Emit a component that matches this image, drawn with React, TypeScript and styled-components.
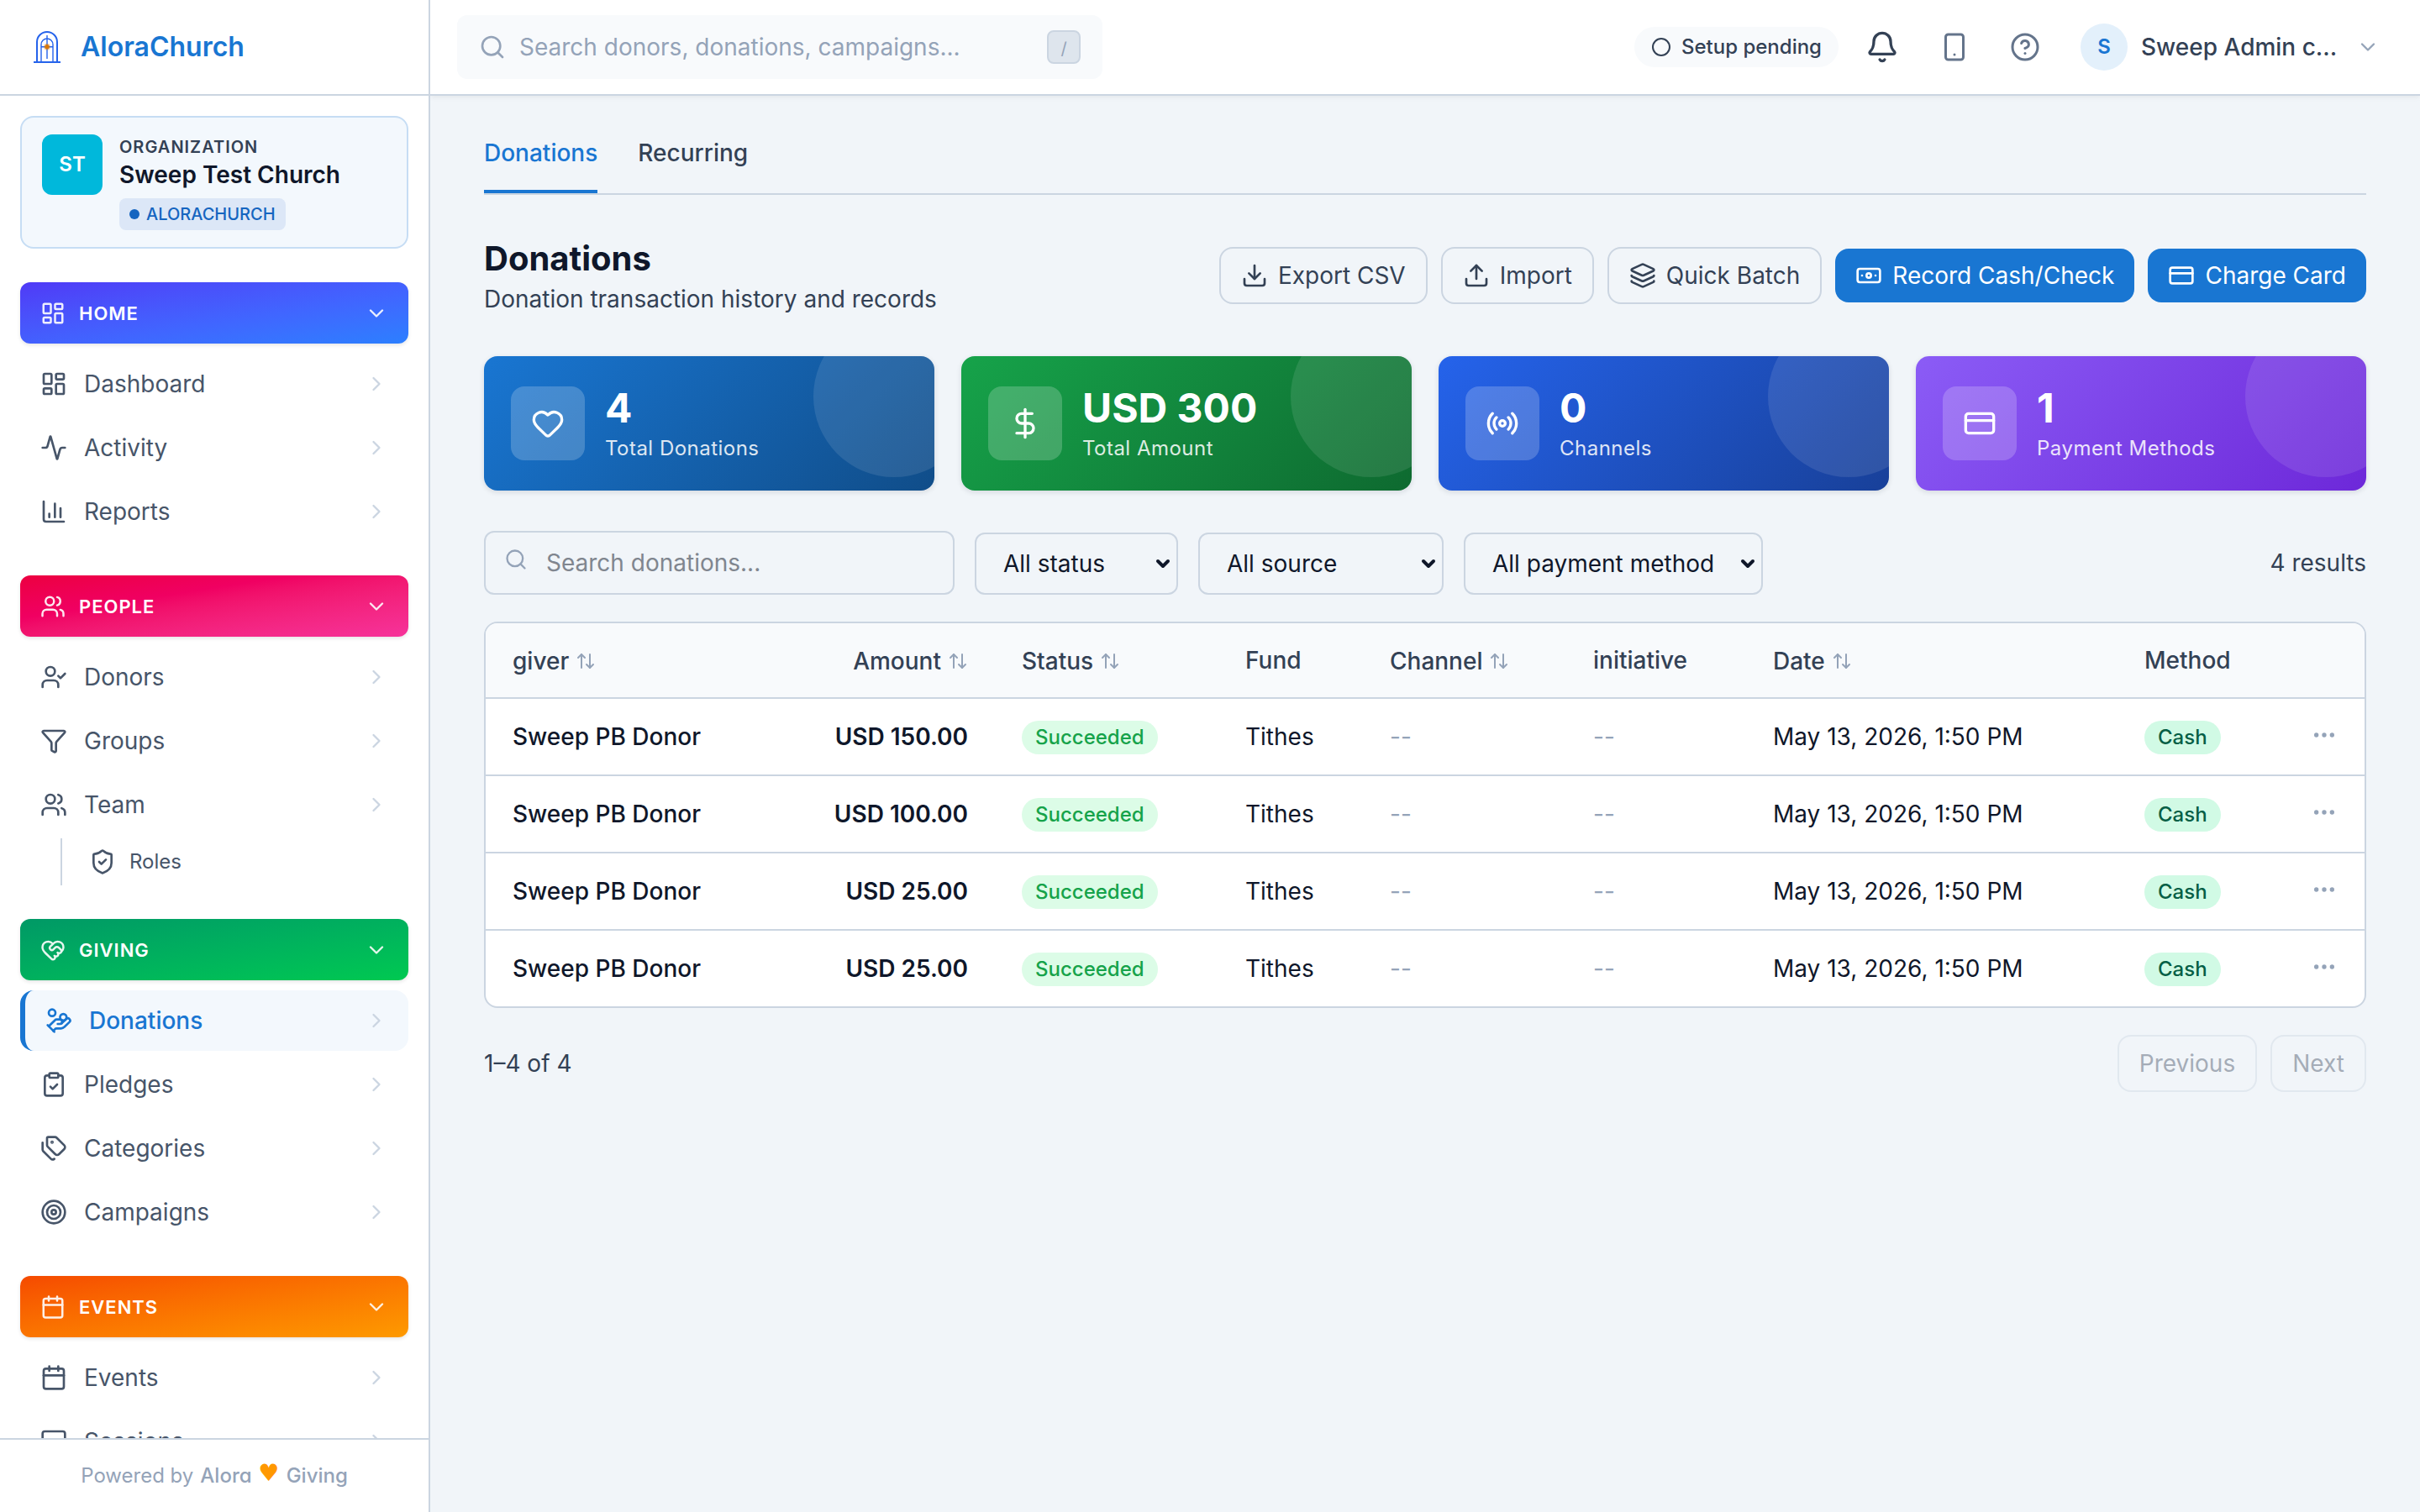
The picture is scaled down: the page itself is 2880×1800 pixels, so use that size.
import React, { useState } from "react";
import styled, { createGlobalStyle, css } from "styled-components";
import {
  Activity,
  ArrowUpDown,
  Banknote,
  Bell,
  Calendar,
  ChartColumn,
  ChevronDown,
  ChevronRight,
  Circle,
  CircleQuestionMark,
  ClipboardCheck,
  CreditCard,
  DollarSign,
  Download,
  Ellipsis,
  Funnel,
  HandCoins,
  Heart,
  HeartHandshake,
  Layers,
  LayoutDashboard,
  LucideIcon,
  Monitor,
  Radio,
  Search,
  ShieldCheck,
  Smartphone,
  Tags,
  Target,
  Upload,
  UserCheck,
  Users,
} from "lucide-react";

const GlobalStyle = createGlobalStyle`
  * {
    box-sizing: border-box;
  }
  body {
    margin: 0;
    background: #f1f5f9;
    color: #0f172a;
    font-family: Inter, "Liberation Sans", sans-serif;
    font-size: 28px;
    line-height: 40px;
  }
  button, input, select {
    font: inherit;
    color: inherit;
  }
  button {
    cursor: pointer;
  }
  a {
    color: inherit;
    text-decoration: none;
  }
  svg {
    display: block;
    flex-shrink: 0;
  }
`;

const Page = styled.div`
  display: flex;
  min-height: 100vh;
`;

/* ---------- sidebar ---------- */

const Sidebar = styled.aside`
  position: sticky;
  top: 0;
  width: 512px;
  height: 100vh;
  flex-shrink: 0;
  display: flex;
  flex-direction: column;
  background: #fff;
  border-right: 2px solid #cbd5e1;
`;

const Brand = styled.a`
  display: flex;
  align-items: center;
  gap: 16px;
  height: 114px;
  flex-shrink: 0;
  padding: 0 32px;
  border-bottom: 2px solid #cbd5e1;
  color: #1976d2;
  font-size: 32px;
  font-weight: 600;
`;

const SidebarBody = styled.div`
  flex: 1;
  min-height: 0;
  overflow: hidden;
  display: flex;
  flex-direction: column;
  gap: 40px;
  padding: 24px;
`;

const OrgCard = styled.div`
  display: flex;
  gap: 20px;
  flex-shrink: 0;
  padding: 20px 24px;
  background: #f3f8fd;
  border: 2px solid #c6ddf4;
  border-radius: 16px;
`;

const OrgAvatar = styled.div`
  display: grid;
  place-items: center;
  width: 72px;
  height: 72px;
  border-radius: 12px;
  background: #00b8db;
  color: #fff;
  font-size: 24px;
  font-weight: 600;
`;

const OrgInfo = styled.div`
  display: flex;
  flex-direction: column;
  align-items: flex-start;
`;

const OrgLabel = styled.span`
  font-size: 20px;
  line-height: 30px;
  font-weight: 600;
  letter-spacing: 1px;
  color: #334155;
`;

const OrgName = styled.strong`
  line-height: 36px;
  font-weight: 600;
`;

const OrgBadge = styled.span`
  display: flex;
  align-items: center;
  gap: 8px;
  height: 38px;
  margin-top: 10px;
  padding: 0 12px;
  border-radius: 8px;
  background: #dce7f7;
  color: #1565c0;
  font-size: 20px;
  font-weight: 500;
`;

const BadgeDot = styled.span`
  width: 12px;
  height: 12px;
  border-radius: 50%;
  background: currentColor;
`;

const Section = styled.section`
  display: flex;
  flex-direction: column;
  gap: 12px;
  flex-shrink: 0;
`;

const SectionButton = styled.button<{ $from: string; $to: string }>`
  display: flex;
  align-items: center;
  gap: 16px;
  height: 73px;
  padding: 0 24px;
  border: none;
  border-radius: 12px;
  background: linear-gradient(
    to bottom right in oklab,
    ${(props) => props.$from},
    ${(props) => props.$to}
  );
  box-shadow: 0 2px 4px rgba(0, 0, 0, 0.1);
  color: #fff;
  font-size: 22px;
  font-weight: 600;
  letter-spacing: 1px;
  text-transform: uppercase;
  svg {
    opacity: 0.9;
  }
`;

const Grow = styled.span`
  flex: 1;
  text-align: left;
`;

const NavList = styled.nav`
  display: flex;
  flex-direction: column;
  gap: 4px;
`;

const NavLink = styled.a<{ $active?: boolean }>`
  display: flex;
  align-items: center;
  gap: 20px;
  height: 72px;
  padding: 0 24px;
  border-radius: 16px;
  color: #475569;
  ${(props) =>
    props.$active &&
    css`
      border-left: 6px solid #1976d2;
      background: #f3f8fd;
      color: #1976d2;
      font-weight: 500;
    `}
`;

const NavArrow = styled(ChevronRight)`
  color: #cbd5e1;
`;

const SubList = styled.div`
  margin-left: 48px;
  border-left: 2px solid #cbd5e1;
`;

const SubLink = styled.a`
  display: flex;
  align-items: center;
  gap: 16px;
  height: 56px;
  padding: 0 32px;
  color: #475569;
  font-size: 24px;
`;

const PoweredBy = styled.footer`
  display: flex;
  align-items: center;
  justify-content: center;
  gap: 8px;
  height: 88px;
  flex-shrink: 0;
  border-top: 2px solid #cbd5e1;
  color: #94a3b8;
  font-size: 24px;
  strong {
    font-weight: 500;
    font-feature-settings: "cv11";
  }
`;

const HeartMark = styled.span`
  padding-bottom: 6px;
  font-family: "DejaVu Sans", sans-serif;
  font-size: 28px;
  color: #ff9800;
`;

/* ---------- top bar ---------- */

const Content = styled.div`
  flex: 1;
  min-width: 0;
`;

const TopBar = styled.header`
  display: flex;
  align-items: center;
  justify-content: space-between;
  height: 114px;
  padding: 0 32px;
  background: #fff;
  border-bottom: 2px solid #cbd5e1;
  box-shadow: 0 2px 6px rgba(0, 0, 0, 0.06);
`;

const GlobalSearch = styled.label`
  display: flex;
  align-items: center;
  gap: 16px;
  width: 768px;
  height: 76px;
  padding: 0 24px;
  border: 2px solid transparent;
  border-radius: 12px;
  background: #f8fafc;
  color: #94a3b8;
`;

const GlobalInput = styled.input`
  flex: 1;
  min-width: 0;
  padding: 0;
  border: none;
  outline: none;
  background: transparent;
  &::placeholder {
    color: #94a3b8;
    opacity: 1;
  }
`;

const Key = styled.kbd`
  display: grid;
  place-items: center;
  width: 40px;
  height: 40px;
  border: 2px solid #cbd5e1;
  border-radius: 8px;
  background: #dee5ed;
  font-family: inherit;
  font-size: 20px;
`;

const TopActions = styled.div`
  display: flex;
  align-items: center;
  gap: 16px;
`;

const SetupPill = styled.button`
  display: flex;
  align-items: center;
  gap: 12px;
  height: 48px;
  padding: 0 20px;
  border: none;
  border-radius: 24px;
  background: #f8fafc;
  color: #334155;
  font-size: 24px;
  font-weight: 500;
`;

const IconButton = styled.button<{ $dark?: boolean }>`
  display: grid;
  padding: 16px;
  border: none;
  background: none;
  color: ${(props) => (props.$dark ? "#334155" : "#64748b")};
`;

const UserButton = styled.button`
  display: flex;
  align-items: center;
  gap: 16px;
  padding: 0 16px;
  border: none;
  background: none;
  color: #334155;
  font-weight: 500;
  svg {
    color: #94a3b8;
  }
`;

const UserAvatar = styled.span`
  display: grid;
  place-items: center;
  width: 56px;
  height: 56px;
  border-radius: 50%;
  background: #e3f0fb;
  color: #1976d2;
  font-size: 24px;
  font-weight: 600;
`;

const UserName = styled.span`
  width: 240px;
  text-align: left;
  white-space: nowrap;
`;

/* ---------- page body ---------- */

const Main = styled.main`
  display: flex;
  flex-direction: column;
  padding: 48px 64px;
`;

const Tabs = styled.div`
  display: flex;
  gap: 48px;
  border-bottom: 2px solid #cbd5e1;
`;

const Tab = styled.button<{ $active: boolean }>`
  height: 68px;
  padding: 0 0 24px;
  border: none;
  border-bottom: 4px solid ${(props) => (props.$active ? "#1976d2" : "transparent")};
  background: none;
  color: ${(props) => (props.$active ? "#1976d2" : "#334155")};
  font-weight: 500;
`;

const PageHead = styled.div`
  display: flex;
  align-items: center;
  justify-content: space-between;
  margin: 48px 0;
`;

const Title = styled.h1`
  margin: 0;
  font-size: 40px;
  line-height: 56px;
  font-weight: 700;
`;

const Subtitle = styled.p`
  margin: 0;
  color: #334155;
`;

const Actions = styled.div`
  display: flex;
  align-items: center;
  gap: 16px;
`;

const Button = styled.button<{ $primary?: boolean }>`
  display: flex;
  align-items: center;
  gap: 12px;
  padding: 12px 24px;
  border: 2px solid #cbd5e1;
  border-radius: 16px;
  background: transparent;
  color: #334155;
  ${(props) =>
    props.$primary &&
    css`
      border: none;
      background: #1976d2;
      color: #fff;
    `}
  &:disabled {
    opacity: 0.4;
    cursor: default;
  }
`;

const StatGrid = styled.div`
  display: grid;
  grid-template-columns: repeat(4, 1fr);
  gap: 32px;
`;

const StatCard = styled.div<{ $from: string; $to: string }>`
  position: relative;
  overflow: hidden;
  display: flex;
  align-items: center;
  gap: 24px;
  padding: 32px;
  border-radius: 16px;
  background: linear-gradient(135deg, ${(props) => props.$from}, ${(props) => props.$to});
  box-shadow: 0 2px 6px rgba(15, 23, 42, 0.12);
  color: #fff;
  &::after {
    content: "";
    position: absolute;
    top: -48px;
    right: -48px;
    width: 192px;
    height: 192px;
    border-radius: 50%;
    background: rgba(255, 255, 255, 0.1);
  }
`;

const StatIcon = styled.div`
  display: grid;
  place-items: center;
  width: 88px;
  height: 88px;
  border-radius: 16px;
  background: rgba(255, 255, 255, 0.2);
`;

const StatValue = styled.div`
  font-size: 48px;
  line-height: 60px;
  font-weight: 700;
`;

const StatLabel = styled.div`
  font-size: 24px;
  line-height: 36px;
  letter-spacing: 0.02em;
  opacity: 0.85;
`;

const Filters = styled.div`
  display: flex;
  align-items: flex-end;
  gap: 24px;
  margin: 48px 0 32px;
`;

const FilterSearch = styled.label`
  display: grid;
  align-items: center;
  width: 560px;
  > * {
    grid-area: 1 / 1;
  }
  svg {
    margin: 0 24px 8px;
    color: #94a3b8;
  }
`;

const FilterInput = styled.input`
  width: 100%;
  height: 76px;
  padding: 0 24px 0 72px;
  border: 2px solid #cbd5e1;
  border-radius: 12px;
  outline: none;
  background: transparent;
  &::placeholder {
    color: #80868f;
    opacity: 1;
  }
`;

const SelectBox = styled.span`
  display: grid;
  align-items: center;
  justify-items: end;
  > * {
    grid-area: 1 / 1;
  }
  svg {
    margin-right: 6px;
    pointer-events: none;
  }
`;

const Select = styled.select<{ $width: number }>`
  width: ${(props) => props.$width}px;
  height: 74px;
  padding: 0 48px 0 32px;
  border: 2px solid #cbd5e1;
  border-radius: 12px;
  appearance: none;
  background: transparent;
`;

const ResultCount = styled.span`
  align-self: center;
  margin-left: auto;
  color: #334155;
`;

const TableFrame = styled.div`
  overflow: hidden;
  border: 2px solid #cbd5e1;
  border-radius: 16px;
  background: #fff;
`;

const Table = styled.table`
  width: 100%;
  table-layout: fixed;
  border-collapse: separate;
  border-spacing: 0;
  text-align: left;
  tbody tr:last-child td {
    height: 90px;
    border-bottom: none;
  }
`;

const Th = styled.th<{ $right?: boolean }>`
  height: 90px;
  padding: 0 32px;
  border-bottom: 2px solid #cbd5e1;
  background: #f8fafc;
  color: #334155;
  font-weight: 500;
  text-align: ${(props) => (props.$right ? "right" : "left")};
`;

const SortButton = styled.button`
  display: inline-flex;
  align-items: center;
  gap: 8px;
  padding: 0;
  border: none;
  background: none;
  vertical-align: middle;
  svg {
    color: #94a3b8;
  }
`;

const Td = styled.td<{ $right?: boolean; $weight?: number; $muted?: boolean }>`
  height: 92px;
  padding: 0 32px;
  border-bottom: 2px solid #cbd5e1;
  white-space: nowrap;
  text-align: ${(props) => (props.$right ? "right" : "left")};
  font-weight: ${(props) => props.$weight || 400};
  color: ${(props) => (props.$muted ? "#94a3b8" : "inherit")};
`;

const Pill = styled.span<{ $tone: "success" | "cash" }>`
  display: inline-block;
  padding: 0 16px;
  border-radius: 20px;
  background: ${(props) => (props.$tone === "success" ? "#dcfce7" : "#d1fae5")};
  color: ${(props) => (props.$tone === "success" ? "#16a34a" : "#065f46")};
  font-size: 24px;
  font-weight: 500;
  vertical-align: middle;
`;

const RowMenu = styled.button`
  display: grid;
  padding: 0 0 4px;
  border: none;
  background: none;
  color: #94a3b8;
`;

const Pager = styled.div`
  display: flex;
  align-items: center;
  justify-content: space-between;
  margin-top: 32px;
  color: #334155;
`;

/* ---------- data ---------- */

type NavItem = {
  label: string;
  icon: LucideIcon;
  children?: { label: string; icon: LucideIcon }[];
};

type NavSection = {
  title: string;
  icon: LucideIcon;
  from: string;
  to: string;
  items: NavItem[];
};

const SECTIONS: NavSection[] = [
  {
    title: "Home",
    icon: LayoutDashboard,
    from: "oklch(51.1% 0.262 276.966)",
    to: "oklch(62.3% 0.214 259.815)",
    items: [
      { label: "Dashboard", icon: LayoutDashboard },
      { label: "Activity", icon: Activity },
      { label: "Reports", icon: ChartColumn },
    ],
  },
  {
    title: "People",
    icon: Users,
    from: "oklch(58.6% 0.253 17.585)",
    to: "oklch(65.6% 0.241 354.308)",
    items: [
      { label: "Donors", icon: UserCheck },
      { label: "Groups", icon: Funnel },
      { label: "Team", icon: Users, children: [{ label: "Roles", icon: ShieldCheck }] },
    ],
  },
  {
    title: "Giving",
    icon: HeartHandshake,
    from: "oklch(59.6% 0.145 163.225)",
    to: "oklch(72.3% 0.219 149.579)",
    items: [
      { label: "Donations", icon: HandCoins },
      { label: "Pledges", icon: ClipboardCheck },
      { label: "Categories", icon: Tags },
      { label: "Campaigns", icon: Target },
    ],
  },
  {
    title: "Events",
    icon: Calendar,
    from: "oklch(64.6% 0.222 41.116)",
    to: "oklch(76.9% 0.188 70.08)",
    items: [
      { label: "Events", icon: Calendar },
      { label: "Sessions", icon: Monitor },
    ],
  },
];

const STATS = [
  { value: "4", label: "Total Donations", icon: Heart, from: "#1976d2", to: "#104d89" },
  { value: "USD 300", label: "Total Amount", icon: DollarSign, from: "#16a34a", to: "#0e6a30" },
  { value: "0", label: "Channels", icon: Radio, from: "#2563eb", to: "#184099" },
  { value: "1", label: "Payment Methods", icon: CreditCard, from: "#8b5cf6", to: "#6d28d9" },
];

const FILTERS = [
  { label: "Status", width: 242, options: ["All status", "Succeeded", "Pending"] },
  { label: "Source", width: 292, options: ["All source", "Online giving"] },
  { label: "Payment method", width: 356, options: ["All payment method", "Cash", "Card"] },
];

const COLUMNS = [
  { label: "giver", sortable: true },
  { label: "Amount", sortable: true, right: true, width: 268 },
  { label: "Status", sortable: true, width: 266 },
  { label: "Fund", width: 172 },
  { label: "Channel", sortable: true, width: 242 },
  { label: "initiative", width: 214 },
  { label: "Date", sortable: true, width: 442 },
  { label: "Method", width: 198 },
  { label: "", width: 96 },
];

const DONATIONS = ["150.00", "100.00", "25.00", "25.00"].map((amount, id) => ({
  id,
  giver: "Sweep PB Donor",
  amount: "USD " + amount,
  fund: "Tithes",
  date: "May 13, 2026, 1:50 PM",
}));

const ChurchLogo = () => (
  <svg width="48" height="48" viewBox="0 0 48 48" fill="none" stroke="#2563eb" aria-hidden="true">
    <path d="M12 42V18a12 12 0 0 1 24 0v24" strokeWidth="2" />
    <path d="M17 42V21a7 7 0 0 1 14 0v21" strokeWidth="1.4" />
    <path d="M24 10v28M17 23.7h14" strokeWidth="1.4" />
    <path d="M8 42h32" strokeWidth="2" />
    <circle cx="24" cy="23.7" r="4" fill="#d97706" fillOpacity="0.35" stroke="none" />
    <circle cx="24" cy="23.7" r="2.6" fill="#d97706" stroke="none" />
  </svg>
);

const SideNav = () => (
  <Sidebar>
    <Brand href="#">
      <ChurchLogo />
      AloraChurch
    </Brand>
    <SidebarBody>
      <OrgCard>
        <OrgAvatar>ST</OrgAvatar>
        <OrgInfo>
          <OrgLabel>ORGANIZATION</OrgLabel>
          <OrgName>Sweep Test Church</OrgName>
          <OrgBadge>
            <BadgeDot />
            ALORACHURCH
          </OrgBadge>
        </OrgInfo>
      </OrgCard>
      {SECTIONS.map((section) => (
        <Section key={section.title}>
          <SectionButton $from={section.from} $to={section.to}>
            <section.icon size={30} />
            <Grow>{section.title}</Grow>
            <ChevronDown size={28} />
          </SectionButton>
          <NavList>
            {section.items.map((item) => (
              <React.Fragment key={item.label}>
                <NavLink href="#" $active={item.label === "Donations"}>
                  <item.icon size={32} />
                  <Grow>{item.label}</Grow>
                  <NavArrow size={28} />
                </NavLink>
                {item.children && (
                  <SubList>
                    {item.children.map((child) => (
                      <SubLink href="#" key={child.label}>
                        <child.icon size={32} />
                        {child.label}
                      </SubLink>
                    ))}
                  </SubList>
                )}
              </React.Fragment>
            ))}
          </NavList>
        </Section>
      ))}
    </SidebarBody>
    <PoweredBy>
      <span>Powered by</span>
      <strong>Alora</strong>
      <HeartMark>♥</HeartMark>
      <strong>Giving</strong>
    </PoweredBy>
  </Sidebar>
);

const Header = () => (
  <TopBar>
    <GlobalSearch>
      <Search size={32} />
      <GlobalInput placeholder="Search donors, donations, campaigns..." aria-label="Search" />
      <Key>/</Key>
    </GlobalSearch>
    <TopActions>
      <SetupPill>
        <Circle size={24} />
        Setup pending
      </SetupPill>
      <IconButton $dark aria-label="Notifications">
        <Bell size={40} />
      </IconButton>
      <IconButton aria-label="Mobile app">
        <Smartphone size={36} />
      </IconButton>
      <IconButton aria-label="Help">
        <CircleQuestionMark size={36} />
      </IconButton>
      <UserButton>
        <UserAvatar>S</UserAvatar>
        <UserName>Sweep Admin c...</UserName>
        <ChevronDown size={28} />
      </UserButton>
    </TopActions>
  </TopBar>
);

const DonationTable = () => (
  <TableFrame>
    <Table>
      <colgroup>
        {COLUMNS.map((col) => (
          <col key={col.label} width={col.width} />
        ))}
      </colgroup>
      <thead>
        <tr>
          {COLUMNS.map((col) => (
            <Th key={col.label} $right={col.right}>
              {col.sortable ? (
                <SortButton>
                  {col.label}
                  <ArrowUpDown size={24} />
                </SortButton>
              ) : (
                col.label
              )}
            </Th>
          ))}
        </tr>
      </thead>
      <tbody>
        {DONATIONS.map((row) => (
          <tr key={row.id}>
            <Td $weight={500}>{row.giver}</Td>
            <Td $right $weight={600}>
              {row.amount}
            </Td>
            <Td>
              <Pill $tone="success">Succeeded</Pill>
            </Td>
            <Td>{row.fund}</Td>
            <Td $muted>--</Td>
            <Td $muted>--</Td>
            <Td>{row.date}</Td>
            <Td>
              <Pill $tone="cash">Cash</Pill>
            </Td>
            <Td>
              <RowMenu aria-label="Row actions">
                <Ellipsis size={32} />
              </RowMenu>
            </Td>
          </tr>
        ))}
      </tbody>
    </Table>
  </TableFrame>
);

const App = () => {
  const [tab, setTab] = useState("Donations");
  return (
    <>
      <GlobalStyle />
      <Page>
        <SideNav />
        <Content>
          <Header />
          <Main>
            <Tabs>
              {["Donations", "Recurring"].map((name) => (
                <Tab key={name} $active={tab === name} onClick={() => setTab(name)}>
                  {name}
                </Tab>
              ))}
            </Tabs>
            <PageHead>
              <div>
                <Title>Donations</Title>
                <Subtitle>Donation transaction history and records</Subtitle>
              </div>
              <Actions>
                <Button>
                  <Download size={32} />
                  Export CSV
                </Button>
                <Button>
                  <Upload size={32} />
                  Import
                </Button>
                <Button>
                  <Layers size={32} />
                  Quick Batch
                </Button>
                <Button $primary>
                  <Banknote size={32} />
                  Record Cash/Check
                </Button>
                <Button $primary>
                  <CreditCard size={32} />
                  Charge Card
                </Button>
              </Actions>
            </PageHead>
            <StatGrid>
              {STATS.map((stat) => (
                <StatCard key={stat.label} $from={stat.from} $to={stat.to}>
                  <StatIcon>
                    <stat.icon size={40} />
                  </StatIcon>
                  <div>
                    <StatValue>{stat.value}</StatValue>
                    <StatLabel>{stat.label}</StatLabel>
                  </div>
                </StatCard>
              ))}
            </StatGrid>
            <Filters>
              <FilterSearch>
                <Search size={28} />
                <FilterInput placeholder="Search donations..." aria-label="Search donations" />
              </FilterSearch>
              {FILTERS.map((filter) => (
                <SelectBox key={filter.label}>
                  <Select aria-label={filter.label} $width={filter.width}>
                    {filter.options.map((option) => (
                      <option key={option}>{option}</option>
                    ))}
                  </Select>
                  <ChevronDown size={24} strokeWidth={4} />
                </SelectBox>
              ))}
              <ResultCount>4 results</ResultCount>
            </Filters>
            <DonationTable />
            <Pager>
              <span>1–4 of 4</span>
              <Actions>
                <Button disabled>Previous</Button>
                <Button disabled>Next</Button>
              </Actions>
            </Pager>
          </Main>
        </Content>
      </Page>
    </>
  );
};

export default App;
